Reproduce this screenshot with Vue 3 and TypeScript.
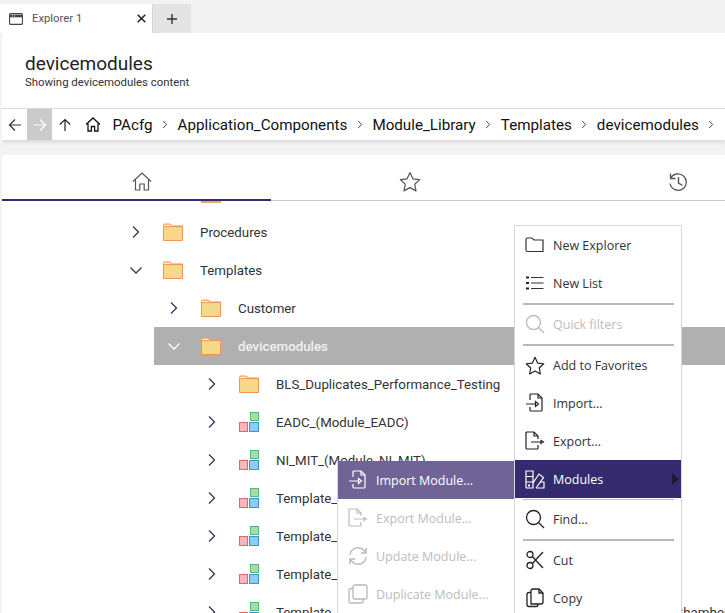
<script setup lang="ts">
interface Row { name: string; indent: number; open?: boolean; kind: 'folder' | 'module'; selected?: boolean }
const rows: Row[] = [
  { name: 'Procedures', indent: 0, kind: 'folder' },
  { name: 'Templates', indent: 0, open: true, kind: 'folder' },
  { name: 'Customer', indent: 1, kind: 'folder' },
  { name: 'devicemodules', indent: 1, open: true, kind: 'folder', selected: true },
  { name: 'BLS_Duplicates_Performance_Testing', indent: 2, kind: 'folder' },
  { name: 'EADC_(Module_EADC)', indent: 2, kind: 'module' },
  { name: 'NI_MIT_(Module_NI_MIT)', indent: 2, kind: 'module' },
  { name: 'Template_', indent: 2, kind: 'module' },
  { name: 'Template_', indent: 2, kind: 'module' },
  { name: 'Template_', indent: 2, kind: 'module' },
  { name: 'Template_Module_Duals_Process_Chamber_Multi_Zones_Transfer_Chamber', indent: 2, kind: 'module' }
]
const crumbs = ['PAcfg', 'Application_Components', 'Module_Library', 'Templates', 'devicemodules']
</script>

<template>
  <div class="page">
    <div class="tabstrip">
      <div class="tab">
        <svg width="14" height="12" viewBox="0 0 14 12" fill="none" stroke="#444" stroke-width="1.1"><rect x=".6" y=".6" width="12.800" height="10.800" rx="1"/><path d="M1 3h12" stroke-width="2.600"/><path d="M3 3h1M5.500 3h1" stroke="#ddd" stroke-width="1"/></svg>
        <span class="tabname">Explorer 1</span>
        <svg class="x" width="9" height="9" viewBox="0 0 9 9" stroke="#222" stroke-width="1.500"><path d="M.7.7l7.600 7.600M8.300.7L.7 8.300"/></svg>
      </div>
      <div class="plus">
        <svg width="12" height="12" viewBox="0 0 12 12" stroke="#333" stroke-width="1.400"><path d="M6 1v10M1 6h10"/></svg>
      </div>
    </div>

    <div class="header">
      <div class="title">devicemodules</div>
      <div class="subtitle">Showing devicemodules content</div>
    </div>

    <div class="crumbbar">
      <button class="nav"><svg width="14" height="14" viewBox="0 0 14 14" fill="none" stroke="#333" stroke-width="1.200"><path d="M13 7H1.500M7 1.500L1.500 7 7 12.500"/></svg></button>
      <button class="nav off"><svg width="14" height="14" viewBox="0 0 14 14" fill="none" stroke="#fff" stroke-width="1.200"><path d="M1 7h11.500M7 1.500L12.500 7 7 12.500"/></svg></button>
      <button class="nav"><svg width="14" height="14" viewBox="0 0 14 14" fill="none" stroke="#222" stroke-width="1.200"><path d="M7 13V1.500M1.800 6.500L7 1.500l5.200 5"/></svg></button>
      <svg class="home" width="16" height="15" viewBox="0 0 16 15" fill="none" stroke="#111" stroke-width="1.300"><path d="M1 7.500L8 1l7 6.500M3 6.500V14h3.400V9.500h3.200V14H13V6.500"/></svg>
      <template v-for="c in crumbs" :key="c">
        <span class="crumb">{{ c }}</span>
        <svg class="sep" width="6" height="9" viewBox="0 0 6 9" fill="none" stroke="#444" stroke-width="1"><path d="M1.200 1l3.400 3.500L1.200 8"/></svg>
      </template>
    </div>

    <div class="panel">
      <div class="ptabs">
        <div class="ptab active">
          <svg width="20" height="19" viewBox="0 0 20 19" fill="none" stroke="#555" stroke-width="1.200"><path d="M1 9.500L10 1l9 8.500M3.500 8v10h4.300v-6h4.400v6h4.300V8"/></svg>
        </div>
        <div class="ptab">
          <svg width="22" height="21" viewBox="0 0 22 21" fill="none" stroke="#555" stroke-width="1.200" stroke-linejoin="round"><path d="M11 1.500l2.900 6.300 6.800.8-5 4.600 1.300 6.700L11 16.600l-6 3.300 1.300-6.700-5-4.600 6.800-.8z"/></svg>
        </div>
        <div class="ptab">
          <svg width="20" height="20" viewBox="0 0 20 20" fill="none" stroke="#555" stroke-width="1.300"><path d="M2.500 1.500v5h5"/><path d="M2.700 6.500A8.200 8.200 0 1 1 2 11.500"/><path d="M10.500 5v6l4 2.500" stroke-width="1.400"/></svg>
        </div>
      </div>

      <div class="tree">
        <div class="clip-folder"></div>
        <div v-for="(r, i) in rows" :key="i" class="row" :class="['lvl' + r.indent, { selected: r.selected }]">
          <svg v-if="r.open" class="chev" width="14" height="14" viewBox="0 0 14 14" fill="none" stroke-width="1.300"><path d="M1.500 4.500L7 10l5.500-5.500"/></svg>
          <svg v-else class="chev" width="14" height="14" viewBox="0 0 14 14" fill="none" stroke-width="1.300"><path d="M4 1.500L9.500 7 4 12.500"/></svg>
          <svg v-if="r.kind === 'folder'" class="ficon" width="20" height="18" viewBox="0 0 20 18"><path d="M.5 2.500Q.5 1 2 1h5l2 2h10.500v14.500H.5z" fill="#f8d98b" stroke="#f0954f"/><path d="M1 2h6.500l1.800 2H1z" fill="#fff2e6"/><path d="M.5 3.600h19" stroke="#f0954f"/></svg>
          <svg v-else class="ficon" width="20" height="20" viewBox="0 0 20 20"><rect x="11.500" y=".5" width="8" height="8" fill="#a8dda8" stroke="#55b77a"/><rect x=".5" y="10.500" width="8" height="9" fill="#f7b7bb" stroke="#e2646c"/><rect x="10.500" y="10.500" width="9" height="9" fill="#90cbf2" stroke="#3f90cf"/></svg>
          <span class="label">{{ r.name }}</span>
        </div>
      </div>
    </div>

    <div class="menu main">
      <div class="mi"><svg width="20" height="16" viewBox="0 0 20 16" fill="none" stroke="#333" stroke-width="1.200"><path d="M1 2.500Q1 1 2.500 1h4.500l2 2h9v11.500H2.500Q1 14.500 1 13z"/></svg><span>New Explorer</span></div>
      <div class="mi"><svg width="20" height="16" viewBox="0 0 20 16" fill="none" stroke="#333" stroke-width="1.200"><path d="M6 2.500h12.500M6 8h12.500M6 13.500h12.500"/><path d="M1 2.500h3M1 8h3M1 13.500h3" stroke-width="2.200" stroke="#222"/></svg><span>New List</span></div>
      <div class="div"></div>
      <div class="mi dis"><svg width="20" height="20" viewBox="0 0 20 20" fill="none" stroke="#bbb" stroke-width="1.400"><circle cx="8.500" cy="8.500" r="7"/><path d="M13.500 13.500l5.500 5.500"/></svg><span>Quick filters</span></div>
      <div class="div"></div>
      <div class="mi"><svg width="20" height="19" viewBox="0 0 22 21" fill="none" stroke="#222" stroke-width="1.300" stroke-linejoin="round"><path d="M11 1.500l2.900 6.300 6.800.8-5 4.600 1.300 6.700L11 16.600l-6 3.300 1.300-6.700-5-4.600 6.800-.8z"/></svg><span>Add to Favorites</span></div>
      <div class="mi"><svg width="20" height="20" viewBox="0 0 20 20" fill="none" stroke="#222" stroke-width="1.200"><path d="M5 7V2q0-1 1-1h7l4 4v12q0 1-1 1H6q-1 0-1-1v-3"/><path d="M13 1v4h4"/><path d="M1 11h9.500M10.500 8.500v5l3-2.500z"/></svg><span>Import...</span></div>
      <div class="mi"><svg width="20" height="20" viewBox="0 0 20 20" fill="none" stroke="#222" stroke-width="1.200"><path d="M13 8V5L9 1H2q-1 0-1 1v15q0 1 1 1h10q1 0 1-1v-3"/><path d="M9 1v4h4"/><path d="M6 11h9.500M16 9.500v3l2.500-1.500z"/></svg><span>Export...</span></div>
      <div class="mi active"><svg width="20" height="20" viewBox="0 0 20 20" fill="none" stroke="#fff" stroke-width="1.200"><path d="M1 2h7v17H2q-1 0-1-1zM1 7.500h7M1 13h7"/><path d="M3 16.500h2" stroke-width="1.800"/><path d="M8 14l6-9 4.500 3.500L11 19"/><path d="M11 19h8v-6h-4"/></svg><span>Modules</span><i class="caret"></i></div>
      <div class="div tight"></div>
      <div class="mi"><svg width="20" height="20" viewBox="0 0 20 20" fill="none" stroke="#222" stroke-width="1.300"><circle cx="8.500" cy="8.500" r="7"/><path d="M13.500 13.500l5.500 5.500"/></svg><span>Find...</span></div>
      <div class="div"></div>
      <div class="mi"><svg width="18" height="20" viewBox="0 0 18 20" fill="none" stroke="#222" stroke-width="1.300"><circle cx="4" cy="4.500" r="3"/><circle cx="4" cy="15.500" r="3"/><path d="M6.300 6.500L17 18M6.300 13.500L17 2"/></svg><span>Cut</span></div>
      <div class="mi"><svg width="18" height="20" viewBox="0 0 18 20" fill="none" stroke="#222" stroke-width="1.300"><path d="M5 3q0-2 2-2h6l4 4v9q0 2-2 2H5z"/><path d="M13 1v4h4"/><path d="M5 4.500H3Q1 4.500 1 6.500v10q0 2 2 2h7q2 0 2-2V16"/></svg><span>Copy</span></div>
    </div>

    <div class="menu sub">
      <div class="mi active2"><svg width="20" height="20" viewBox="0 0 20 20" fill="none" stroke="#fff" stroke-width="1.200"><path d="M5 7V2q0-1 1-1h7l4 4v12q0 1-1 1H6q-1 0-1-1v-3"/><path d="M13 1v4h4"/><path d="M1 11h9.500M10.500 8.500v5l3-2.500z"/></svg><span>Import Module...</span></div>
      <div class="mi dis"><svg width="20" height="20" viewBox="0 0 20 20" fill="none" stroke="#bbb" stroke-width="1.200"><path d="M13 8V5L9 1H2q-1 0-1 1v15q0 1 1 1h10q1 0 1-1v-3"/><path d="M9 1v4h4"/><path d="M6 11h9.500M16 9.500v3l2.500-1.500z"/></svg><span>Export Module...</span></div>
      <div class="mi dis"><svg width="20" height="20" viewBox="0 0 20 20" fill="none" stroke="#bbb" stroke-width="1.500"><path d="M2 9a8 8 0 0 1 14-4.500l2 2M18 2v5h-5"/><path d="M18 11a8 8 0 0 1-14 4.500l-2-2M2 18v-5h5"/></svg><span>Update Module...</span></div>
      <div class="mi dis"><svg width="20" height="20" viewBox="0 0 20 20" fill="none" stroke="#bbb" stroke-width="1.300"><rect x="5" y="1" width="14" height="14" rx="2"/><path d="M5 4.500H3Q1 4.500 1 6.500V17q0 2 2 2h10q2 0 2-2v-2"/></svg><span>Duplicate Module...</span></div>
    </div>
  </div>
</template>

<style>
html, body { margin: 0; background: #f3f3f3; overflow: hidden; }
</style>

<style scoped>
.page { position: relative; width: 725px; height: 613px; overflow: hidden; background: #f3f3f3; font-family: Roboto, "Liberation Sans", sans-serif; color: #222; }
.tabstrip { display: flex; height: 33px; padding-top: 4px; box-sizing: border-box; }
.tab { width: 153px; background: #fff; display: flex; align-items: center; padding-left: 9px; box-sizing: border-box; border-right: 1px solid #d6d4e4; }
.tabname { margin-left: 9px; font-size: 11.3px; color: #555; flex: 1; }
.x { margin-right: 6px; }
.plus { width: 38px; background: #e4e4e4; display: flex; align-items: center; justify-content: center; }
.header { margin-left: 2px; height: 76px; background: #fff; padding: 20px 0 0 23px; box-sizing: border-box; border-bottom: 1px solid #d9d7e3; }
.title { font-size: 19px; line-height: 22px; color: #222; }
.subtitle { font-size: 11.4px; line-height: 14px; color: #333; }
.crumbbar { margin-left: 2px; height: 31px; background: #fff; display: flex; align-items: center; box-shadow: 0 2px 4px rgba(0,0,0,.12); position: relative; overflow: hidden; clip-path: inset(0 0 -8px 0); }
.nav { width: 25px; height: 31px; padding: 0; border: 0; background: transparent; display: flex; align-items: center; justify-content: center; flex: none; }
.nav.off { background: #cbcbcb; }
.home { margin: 0 11.500px 0 8px; flex: none; }
.crumb { font-size: 15.2px; color: #111; white-space: nowrap; flex: none; }
.sep { margin: 0 9.500px; flex: none; }
.panel { margin: 15px 0 0 2px; height: 458px; background: #fff; }
.ptabs { display: flex; height: 46px; border-bottom: 1px solid #c9c9c9; box-sizing: border-box; }
.ptab { width: 269px; flex: none; display: flex; align-items: center; justify-content: center; position: relative; padding-top: 8px; box-sizing: border-box; }
.ptab:nth-child(1) { padding-left: 11px; }
.ptab:nth-child(2) { padding-left: 9px; }
.ptab:nth-child(3) { width: 185px; justify-content: flex-end; padding-right: 37px; }
.ptab.active::after { content: ""; position: absolute; left: 0; right: 0; bottom: -1px; height: 2px; background: #352a6d; }
.tree { position: relative; padding-top: 12px; }
.clip-folder { position: absolute; left: 199px; top: 0; width: 20px; height: 2px; background: #f0a36e; }
.row { height: 38px; display: flex; align-items: center; box-sizing: border-box; font-size: 13.3px; color: #333; }
.lvl0 { padding-left: 127px; }
.lvl1 { padding-left: 165px; }
.lvl2 { padding-left: 203px; }
.chev { stroke: #2d3a55; flex: none; }
.ficon { margin-left: 20px; flex: none; }
.label { margin-left: 17px; white-space: nowrap; }
.row.selected { background: #b0b0b0; color: #f1f1f1; margin-left: 152px; padding-left: 13px; font-weight: 500; }
.row.selected .chev { stroke: #fff; }
.menu { position: absolute; background: #fff; box-sizing: border-box; font-family: "Open Sans", "Liberation Sans", sans-serif; font-size: 12.500px; color: #333; }
.main { left: 514px; top: 225px; width: 168px; height: 388px; border: 1px solid #d8d6e6; border-bottom: 0; }
.sub { left: 338px; top: 461px; width: 176px; height: 152px; box-shadow: -1px 0 0 #d8d6e6; }
.mi { height: 38px; display: flex; align-items: center; padding-left: 10px; box-sizing: border-box; position: relative; }
.mi svg { flex: none; width: 20px; }
.mi span { margin-left: 8px; white-space: nowrap; }
.mi.dis { color: #bdbdbd; }
.mi.active { background: #352a6d; color: #fff; }
.mi.active2 { background: #6f6495; color: #fff; }
.caret { position: absolute; right: 2px; top: 13px; width: 0; height: 0; border-left: 7px solid #1e1a33; border-top: 6px solid transparent; border-bottom: 6px solid transparent; }
.div { height: 2px; margin: 1px 7px 0 8px; background: #b8b8b8; }
.div.tight { height: 1px; }
</style>
